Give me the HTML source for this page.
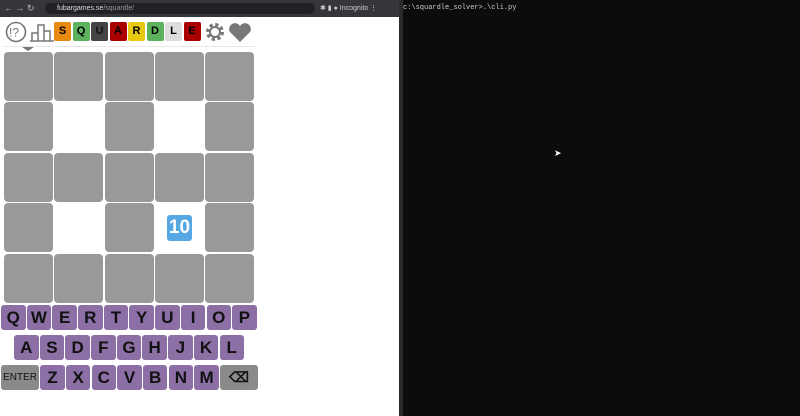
<!DOCTYPE html><html><head><style>
*{margin:0;padding:0;box-sizing:border-box}
body{width:800px;height:416px;overflow:hidden;background:#fff;font-family:"Liberation Sans",sans-serif;position:relative}
.a{position:absolute}
.bar{left:0;top:0;width:400px;height:17px;background:#35363a}
.url{left:45px;top:3px;width:270px;height:11px;background:#202124;border-radius:6px;color:#ddd;font-size:7px;line-height:11px;padding-left:12px}
.term{left:403px;top:0;width:397px;height:416px;background:#0c0c0c}
.div{left:399px;top:0;width:4px;height:416px;background:#2b2b2b}
.c{background:#9a9998;border-radius:4px;width:49px;height:49px}
.k{background:#8c6fa5;border-radius:3px;height:25px;width:24.5px;font-weight:bold;font-size:17px;text-align:center;line-height:25px;color:#111}
.t{width:17px;height:19px;font-size:11px;line-height:19px;text-align:center;font-weight:bold;border-radius:2px}
</style></head><body>
<div class="a bar"></div>
<div class="a" style="left:4px;top:3px;color:#bbb;font-size:9px">← → ↻</div>
<div class="a url">fubargames.se<span style="color:#999">/squardle/</span></div>
<div class="a" style="left:320px;top:4px;color:#ccc;font-size:7px">✱ ▮ ● Incognito ⋮</div>
<div class="a div"></div>
<div class="a term"><div style="color:#ccc;font-family:'Liberation Mono',monospace;font-size:7px;position:absolute;left:0;top:4px">c:\squardle_solver&gt;.\cli.py</div>
<div style="position:absolute;left:151px;top:148px;color:#fff;font-size:9px">➤</div></div>
<svg class="a" style="left:5px;top:21px" width="250" height="22">
<circle cx="11" cy="11" r="9.5" fill="none" stroke="#777" stroke-width="1.6"/>
<text x="4" y="15.5" font-size="12" fill="#777" font-family="Liberation Sans">!?</text>
<path d="M25 20h24M27 20v-8h6v8M33 20v-16h6v16M39 20v-10h6v10" fill="none" stroke="#777" stroke-width="1.5"/>
<circle cx="210" cy="11" r="7" fill="none" stroke="#777" stroke-width="4" stroke-dasharray="3 2.5"/>
<circle cx="210" cy="11" r="5" fill="none" stroke="#777" stroke-width="2"/>
<path d="M235 21l-10-10a5 5 0 0 1 10-6a5 5 0 0 1 10 6z" fill="#777"/>
</svg>
<div class="a" style="left:54px;top:22px;display:flex;gap:1.5px">
<div class="t" style="background:#e88a10">S</div><div class="t" style="background:#5db35d">Q</div><div class="t" style="background:#444;color:#111">U</div><div class="t" style="background:#a00">A</div><div class="t" style="background:#e8c810">R</div><div class="t" style="background:#5db35d">D</div><div class="t" style="background:#ddd">L</div><div class="t" style="background:#a00">E</div></div>
<div class="a" style="left:3px;top:46px;width:252px;height:1px;background:#e8e8e8"></div>
<div class="a" style="left:22px;top:47px;border-left:6px solid transparent;border-right:6px solid transparent;border-top:4px solid #777"></div>
<div class="a c" style="left:4px;top:52px"></div><div class="a c" style="left:54px;top:52px"></div><div class="a c" style="left:105px;top:52px"></div><div class="a c" style="left:155px;top:52px"></div><div class="a c" style="left:205px;top:52px"></div>
<div class="a c" style="left:4px;top:102px"></div><div class="a c" style="left:105px;top:102px"></div><div class="a c" style="left:205px;top:102px"></div>
<div class="a c" style="left:4px;top:153px"></div><div class="a c" style="left:54px;top:153px"></div><div class="a c" style="left:105px;top:153px"></div><div class="a c" style="left:155px;top:153px"></div><div class="a c" style="left:205px;top:153px"></div>
<div class="a c" style="left:4px;top:203px"></div><div class="a c" style="left:105px;top:203px"></div><div class="a c" style="left:205px;top:203px"></div>
<div class="a c" style="left:4px;top:254px"></div><div class="a c" style="left:54px;top:254px"></div><div class="a c" style="left:105px;top:254px"></div><div class="a c" style="left:155px;top:254px"></div><div class="a c" style="left:205px;top:254px"></div>
<div class="a" style="left:167px;top:215px;width:25px;height:26px;background:#55a8e4;border-radius:3px;color:#fff;font-weight:bold;font-size:19px;text-align:center;line-height:26px">10</div>
<div class="a" style="left:1px;top:305px;display:flex;gap:1.2px"><div class="k">Q</div><div class="k">W</div><div class="k">E</div><div class="k">R</div><div class="k">T</div><div class="k">Y</div><div class="k">U</div><div class="k">I</div><div class="k">O</div><div class="k">P</div></div>
<div class="a" style="left:14px;top:335px;display:flex;gap:1.2px"><div class="k">A</div><div class="k">S</div><div class="k">D</div><div class="k">F</div><div class="k">G</div><div class="k">H</div><div class="k">J</div><div class="k">K</div><div class="k">L</div></div>
<div class="a" style="left:1px;top:365px;display:flex;gap:1.2px"><div class="k" style="width:38px;background:#8a8a8a;font-size:10px;font-weight:normal">ENTER</div><div class="k">Z</div><div class="k">X</div><div class="k">C</div><div class="k">V</div><div class="k">B</div><div class="k">N</div><div class="k">M</div><div class="k" style="width:38px;background:#8a8a8a;font-size:14px">⌫</div></div>
</body></html>
